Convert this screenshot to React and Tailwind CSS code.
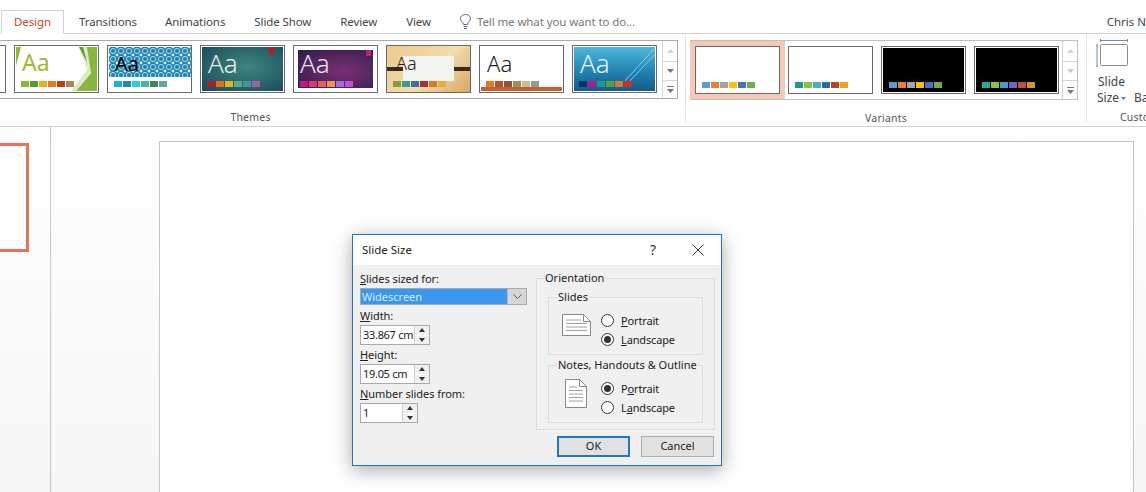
import React from "react";

const F = { fontFamily: '"Noto Sans", "Open Sans", sans-serif' };

function Aa({ className, children = "Aa" }) {
  return <span className={"block leading-none " + className}>{children}</span>;
}

function Swatches({ colors, className = "" }) {
  return (
    <div className={"flex gap-[1px] " + className}>
      {colors.map((c, i) => (
        <span key={i} className="block w-[8px] h-[6px]" style={{ background: c }} />
      ))}
    </div>
  );
}

function Thumb({ outer = "border-[#6a6a6a]", className = "bg-white", deco, aa, aaClass, colors, swClass = "ml-[6px]" }) {
  return (
    <div className={"relative shrink-0 w-[85px] h-[48px] border overflow-hidden bg-white " + outer}>
      <div className={"relative h-full w-full overflow-hidden " + className}>
        {deco}
        {aa && <Aa className={"relative " + aaClass}>{aa}</Aa>}
        <div className={"absolute left-0 top-[35px] " + swClass}>
          <Swatches colors={colors} />
        </div>
      </div>
    </div>
  );
}

const green = (
  <svg className="absolute inset-0" width="85" height="48" viewBox="0 0 85 48">
    <path d="M1 1H6L1 20Z" fill="#8fb83a" />
    <path d="M64 1H82V45H61L76 27Z" fill="#86b83c" />
    <path d="M64 1H72L76 27L61 45H56L72 24Z" fill="#dfe9c6" />
    <path d="M64 1H68L72 16Z" fill="#5f9a35" />
  </svg>
);
const pattern = (
  <svg className="absolute left-[1px] top-[1px]" width="83" height="30" viewBox="0 0 83 30">
    <defs>
      <pattern id="p1" width="8" height="8" patternUnits="userSpaceOnUse">
        <rect width="8" height="8" fill="#1f86b5" />
        <circle cx="4" cy="4" r="2.6" fill="none" stroke="#d6eaf3" strokeWidth="0.8" />
        <circle cx="0" cy="0" r="1.4" fill="#e8f3f8" />
        <circle cx="8" cy="0" r="1.4" fill="#e8f3f8" />
        <circle cx="0" cy="8" r="1.4" fill="#e8f3f8" />
        <circle cx="8" cy="8" r="1.4" fill="#e8f3f8" />
      </pattern>
    </defs>
    <rect width="83" height="30" fill="url(#p1)" />
  </svg>
);
const bar = (cls) => <span className={"absolute block w-[5px] h-[7px] " + cls} />;

const themes = [
  { className: "bg-white", deco: green, aa: "Aa", aaClass: "text-[#9dbb2e] text-[23px] ml-[7px] mt-[5px]", colors: ["#8db52d", "#529f34", "#ecb01f", "#e47a1c", "#c13c18", "#a28a54"] },
  { className: "bg-white", deco: pattern, aa: "Aa", aaClass: "text-black text-[20px] ml-[7px] mt-[8px]", colors: ["#1cade4", "#2683c6", "#27ced7", "#42ba97", "#3e8853", "#62a39f"] },
  { className: "bg-[radial-gradient(ellipse_at_55%_45%,#3f8482,#174a58)] border border-white", deco: bar("bg-[#b31d2a] right-[9px] top-[1px]"), aa: "Aa", aaClass: "text-[#e8f1ef] text-[26px] ml-[6px] mt-[3px] font-light", colors: ["#b31d2a", "#e36c1d", "#e3b21d", "#5aa88c", "#4b8e9c", "#9a66a0"], swClass: "ml-[5px] -mt-[1px]" },
  { className: "bg-[radial-gradient(ellipse_at_60%_55%,#7a2f74,#2c1d4a)] border-[4px] border-white", deco: bar("bg-[#c41c82] right-[2px] -top-[1px]"), aa: "Aa", aaClass: "text-[#f0e4f2] text-[26px] ml-[2px] font-light", colors: ["#c4187c", "#d9396f", "#e0624f", "#e89a4a", "#9a6ee0", "#c44fd6"], swClass: "ml-[2px] -mt-[4px]" },
  {
    className: "bg-[linear-gradient(135deg,#ecc98a,#f2dcae_55%,#d9a860)]",
    deco: (
      <>
        <span className="absolute block left-0 right-0 top-[21px] h-[4px] bg-[#3a2a20]" />
        <span className="absolute block left-[16px] top-[10px] w-[51px] h-[25px] bg-[#f3f3f0]" />
      </>
    ),
    aa: "Aa", aaClass: "text-[#222] text-[18px] ml-[9px] mt-[8px] font-light", colors: ["#8a9a3c", "#3d9a8a", "#3f6fa5", "#a83232", "#d97a2b", "#e0b03a"],
  },
  {
    className: "bg-white",
    deco: <span className="absolute block left-[1px] right-[1px] bottom-[1px] h-[4px] bg-[#c4602e]" />,
    aa: "Aa", aaClass: "text-[#222] text-[22px] ml-[7px] mt-[6px] font-light", colors: ["#e07a1b", "#b5522c", "#8a5140", "#a08c5c", "#c9bf8e", "#90a088"],
  },
  {
    className: "bg-[linear-gradient(180deg,#4db8dc,#1e7fae_60%,#155a88)] border border-white",
    deco: (
      <svg className="absolute inset-0" width="83" height="46" viewBox="0 0 83 46">
        <path d="M50 35L80 2M54 36L82 6" stroke="#a6dcee" strokeWidth="0.8" fill="none" />
      </svg>
    ),
    aa: "Aa", aaClass: "text-[#e8f7fc] text-[26px] ml-[6px] mt-[3px] font-light", colors: ["#0f2f6e", "#b01a8a", "#1d9a8a", "#5aa03c", "#d9773a", "#c42e2e"], swClass: "ml-[5px] -mt-[1px]",
  },
];

const variants = [
  { colors: ["#5b9bd5", "#ed7d31", "#a5a5a5", "#ffc000", "#4472c4", "#70ad47"], dark: false, sel: true },
  { colors: ["#1f9c7c", "#8fbf3f", "#3fb0c8", "#1f6fa8", "#b04a20", "#f0a020"], dark: false },
  { colors: ["#5b9bd5", "#ed7d31", "#a5a5a5", "#ffc000", "#4472c4", "#70ad47"], dark: true },
  { colors: ["#1fae9c", "#8fbf3f", "#3fa0d0", "#7a5fc8", "#c0522c", "#d0982c"], dark: true },
];

function GalleryButtons({ disabled }) {
  const arrow = disabled ? "#c8c8c8" : "#777";
  return (
    <div className="w-[15px] shrink-0 flex flex-col border-l border-[#d4d4d4] h-full">
      <div className="h-[21px] flex items-center justify-center border-b border-[#d4d4d4]">
        <svg width="7" height="4"><path d="M0 4L3.5 0L7 4Z" fill="#d0d0d0" /></svg>
      </div>
      <div className="h-[19px] flex items-center justify-center border-b border-[#d4d4d4]">
        <svg width="7" height="4"><path d="M0 0L3.5 4L7 0Z" fill={arrow} /></svg>
      </div>
      <div className="flex-1 flex items-center justify-center">
        <svg width="7" height="7"><path d="M0 0H7V1H0ZM0 3L3.5 7L7 3Z" fill="#777" /></svg>
      </div>
    </div>
  );
}

function Tab({ children, className = "" }) {
  return <span className={"text-[11.5px] tracking-[-0.1px] leading-none text-[#444] " + className}>{children}</span>;
}

function Ribbon() {
  return (
    <div className="h-[93px] shrink-0 border-b border-[#d2d2d2] flex overflow-hidden relative">
      <div className="w-[686px] shrink-0 border-r border-[#e2e2e2] h-[88px] flex flex-col">
        <div className="mt-[6px] h-[60px] w-[678px] border-y border-r border-[#ababab] flex items-stretch overflow-hidden">
          <div className="flex-1 flex gap-[8px] items-center overflow-hidden">
            <div className="shrink-0 w-[85px] h-[48px] border border-[#6a6a6a] bg-white -ml-[79px]" />
            {themes.map((t, i) => (
              <Thumb key={i} {...t} />
            ))}
          </div>
          <GalleryButtons />
        </div>
        <div className="text-center text-[10.5px] leading-none text-[#555] mt-[13px] pr-[184px] tracking-[0.2px]">Themes</div>
      </div>
      <div className="w-[401px] shrink-0 border-r border-[#e2e2e2] h-[88px] flex flex-col">
        <div className="mt-[6px] ml-[4px] h-[60px] w-[388px] border-y border-r border-[#c0c0c0] flex items-stretch">
          <div className="flex-1 flex items-center gap-[8px]">
            {variants.map((v, i) => (
              <div key={i} className={v.sel ? "shrink-0 bg-[#f6c9b7] p-[5px] -mr-[5px] h-[58px] flex items-center" : "shrink-0"}>
                <Thumb
                  outer={v.dark ? "border-[#6a6a6a] p-[1px]" : "border-[#6a6a6a]"}
                  className={v.dark ? "bg-black" : "bg-white"}
                  colors={v.colors}
                  swClass={v.dark ? "ml-[6px] -mt-[1px]" : "ml-[6px]"}
                />
              </div>
            ))}
          </div>
          <GalleryButtons disabled />
        </div>
        <div className="text-center text-[10.5px] leading-none text-[#555] mt-[13px] tracking-[0.2px]">Variants</div>
      </div>
      <div className="flex-1 relative">
        <div className="flex gap-[7px] ml-[9px] mt-[5px]">
          <div className="flex flex-col w-[40px] shrink-0">
            <svg width="34" height="28" viewBox="0 0 34 28" fill="none">
              <path d="M4.5 1.5H31.5M4.5 0V3M31.5 0V3M1 6V27M0 6H2M0 27H2" stroke="#6f8fa8" />
              <rect x="4.5" y="5.5" width="27" height="21" rx="1" stroke="#8a8a8a" />
            </svg>
            <div className="text-[12px] leading-[16px] text-[#444] mt-[7px] ml-[2px]">Slide</div>
            <div className="flex items-center text-[12px] leading-[16px] text-[#444] ml-[1px]">
              Size
              <svg className="ml-[2px]" width="5" height="3"><path d="M0 0H5L2.5 3Z" fill="#777" /></svg>
            </div>
          </div>
        </div>
        <span className="absolute left-[47px] top-[56px] text-[12px] leading-[16px] text-[#444]">Ba</span>
        <span className="absolute left-[33px] top-[78px] text-[10.5px] leading-none text-[#555] tracking-[0.2px]">Custo</span>
      </div>
    </div>
  );
}

function U({ children }) {
  return <span className="underline underline-offset-[1px]">{children}</span>;
}

function Spinner({ value, width }) {
  return (
    <div className={"flex h-[20px] border border-[#a9a9a9] bg-white " + width}>
      <div className="flex-1 pl-[2px] text-[11px] tracking-[-0.3px] leading-[18px] text-[#222] whitespace-nowrap">{value}</div>
      <div className="w-[15px] shrink-0 flex flex-col gap-[1px] bg-white border-l border-[#d0d0d0]">
        <div className="flex-1 bg-[#f0f0f0] flex items-center justify-center">
          <svg width="6" height="4"><path d="M0 4L3 0L6 4Z" fill="#333" /></svg>
        </div>
        <div className="flex-1 bg-[#f0f0f0] flex items-center justify-center">
          <svg width="6" height="4"><path d="M0 0L3 4L6 0Z" fill="#333" /></svg>
        </div>
      </div>
    </div>
  );
}

function Label({ children, className = "" }) {
  return <div className={"text-[11px] tracking-[-0.05px] leading-[14px] text-[#222] whitespace-nowrap " + className}>{children}</div>;
}

function Radio({ checked, children }) {
  return (
    <div className="flex items-center h-[19px]">
      <span className="w-[13px] h-[13px] rounded-full border border-[#333] bg-white flex items-center justify-center shrink-0">
        {checked && <span className="block w-[7px] h-[7px] rounded-full bg-[#333]" />}
      </span>
      <span className="ml-[7px] text-[11px] tracking-[-0.15px] leading-none text-[#222]">{children}</span>
    </div>
  );
}

function DocLandscape() {
  return (
    <svg width="29" height="22" viewBox="0 0 29 22" fill="none" className="shrink-0">
      <path d="M0.5 0.5H21.5L28.5 7.5V21.5H0.5Z" fill="white" stroke="#888" />
      <path d="M21.5 0.5V7.5H28.5" stroke="#888" />
      <path d="M4 6H19M4 9.5H25M4 13H25M4 16.5H25" stroke="#a0a0a0" />
    </svg>
  );
}
function DocPortrait() {
  return (
    <svg width="22" height="29" viewBox="0 0 22 29" fill="none" className="shrink-0">
      <path d="M0.5 0.5H14.5L21.5 7.5V28.5H0.5Z" fill="white" stroke="#888" />
      <path d="M14.5 0.5V7.5H21.5" stroke="#888" />
      <path d="M4 8H12M4 11.5H18M4 15H18M4 18.5H18M4 22H18" stroke="#a0a0a0" />
    </svg>
  );
}

function Group({ title, icon, iconClass, children, className = "" }) {
  return (
    <fieldset className={"border border-[#dcdcdc] w-[155px] h-[64px] " + className}>
      <legend className="ml-[8px] px-[1px] text-[11px] leading-[12px] text-[#222] whitespace-nowrap">{title}</legend>
      <div className="flex items-center h-[52px] pt-[1px]">
        <div className={"w-[52px] shrink-0 flex " + iconClass}>{icon}</div>
        <div className="flex flex-col">{children}</div>
      </div>
    </fieldset>
  );
}

function Dialog() {
  return (
    <div className="absolute left-[352px] top-[234px] w-[370px] h-[232px] border border-[#1f78b4] bg-[#f0f0f0] shadow-[0_4px_18px_rgba(0,0,0,0.35)] flex flex-col">
      <div className="h-[30px] bg-white flex items-center shrink-0">
        <span className="ml-[9px] text-[11.5px] text-[#222] leading-none">Slide Size</span>
        <span className="ml-auto text-[14px] text-[#333] leading-none">?</span>
        <svg className="ml-[36px] mr-[17px]" width="12" height="12" viewBox="0 0 12 12">
          <path d="M0.5 0.5L11.5 11.5M11.5 0.5L0.5 11.5" stroke="#333" />
        </svg>
      </div>
      <div className="flex-1 flex pl-[7px]">
        <div className="w-[176px] shrink-0 pt-[7px]">
          <Label>
            <U>S</U>lides sized for:
          </Label>
          <div className="mt-[2px] h-[17px] w-[167px] flex border border-[#a9a9a9] bg-white">
            <div className="flex-1 bg-[#3b96f0] text-[11px] leading-[15px] text-[#d8ecff] pl-[1px]">Widescreen</div>
            <div className="w-[19px] shrink-0 bg-[#d6d6d6] border-l border-[#b8b8b8] flex items-center justify-center">
              <svg width="9" height="5" viewBox="0 0 9 5" fill="none"><path d="M0.5 0.5L4.5 4.5L8.5 0.5" stroke="#555" /></svg>
            </div>
          </div>
          <Label className="mt-[4px]">
            <U>W</U>idth:
          </Label>
          <Spinner value="33.867 cm" width="w-[70px] mt-[2px]" />
          <Label className="mt-[3px]">
            <U>H</U>eight:
          </Label>
          <Spinner value="19.05 cm" width="w-[70px] mt-[2px]" />
          <Label className="mt-[3px]">
            <U>N</U>umber slides from:
          </Label>
          <Spinner value="1" width="w-[58px] mt-[2px]" />
        </div>
        <div className="flex flex-col">
          <fieldset className="border border-[#dcdcdc] w-[179px] h-[159px] mt-[6px] pl-[11px]">
            <legend className="ml-[-4px] px-[1px] text-[11px] leading-[14px] text-[#222]">Orientation</legend>
            <div className="pt-[6px]">
              <Group title="Slides" icon={<DocLandscape />} iconClass="pl-[13px] -mt-[9px]">
                <Radio><U>P</U>ortrait</Radio>
                <Radio checked><U>L</U>andscape</Radio>
              </Group>
              <Group title="Notes, Handouts & Outline" icon={<DocPortrait />} iconClass="pl-[16px] -mt-[8px]" className="mt-[4px]">
                <Radio checked>P<U>o</U>rtrait</Radio>
                <Radio>L<U>a</U>ndscape</Radio>
              </Group>
            </div>
          </fieldset>
          <div className="flex justify-end gap-[11px] mt-[6px] mr-[1px]">
            <div className="w-[73px] h-[21px] border-2 border-[#1f78c4] bg-[#e1e1e1] flex items-center justify-center text-[11px] text-[#222]">OK</div>
            <div className="w-[73px] h-[21px] border border-[#adadad] bg-[#e1e1e1] flex items-center justify-center text-[11px] text-[#222]">Cancel</div>
          </div>
        </div>
      </div>
    </div>
  );
}

export default function App() {
  return (
    <div style={F} className="relative w-[1146px] h-[492px] overflow-hidden bg-white flex flex-col">
      <div className="h-[34px] shrink-0 border-b border-[#d2d2d2] flex items-end relative">
        <div className="ml-[1px] w-[63px] h-[24px] -mb-[1px] border border-b-white border-[#d2d2d2] bg-white flex items-center justify-center text-[11.5px] tracking-[-0.1px] text-[#c8452a] leading-none">
          Design
        </div>
        <div className="flex items-center h-[23px] flex-1">
          <Tab className="ml-[15px]">Transitions</Tab>
          <Tab className="ml-[28px]">Animations</Tab>
          <Tab className="ml-[29px]">Slide Show</Tab>
          <Tab className="ml-[29px]">Review</Tab>
          <Tab className="ml-[29px]">View</Tab>
          <svg className="ml-[29px]" width="11" height="15" viewBox="0 0 11 15" fill="none">
            <path d="M3.5 10.5C3.5 8 0.5 7.5 0.5 4.5C0.5 2 2.8 0.5 5.5 0.5C8.2 0.5 10.5 2 10.5 4.5C10.5 7.5 7.5 8 7.5 10.5ZM3.5 12.5H7.5M4 14.5H7" stroke="#666" />
          </svg>
          <span className="ml-[6px] text-[11.5px] tracking-[-0.1px] text-[#777] leading-none">Tell me what you want to do...</span>
          <span className="ml-auto text-[11.5px] text-[#444] leading-none whitespace-nowrap">Chris N</span>
        </div>
      </div>
      <Ribbon />
      <div className="flex-1 flex bg-[linear-gradient(180deg,#ffffff,#f6f6f6)]">
        <div className="w-[51px] shrink-0 border-r border-[#c8c8c8] pt-[16px]">
          <div className="w-[29px] h-[109px] border-[3px] border-l-0 border-[#e5745a] bg-white" />
        </div>
        <div className="ml-[108px] mt-[14px] w-[975px] border border-b-0 border-[#c6c6c6] bg-white" />
      </div>
      <Dialog />
    </div>
  );
}
